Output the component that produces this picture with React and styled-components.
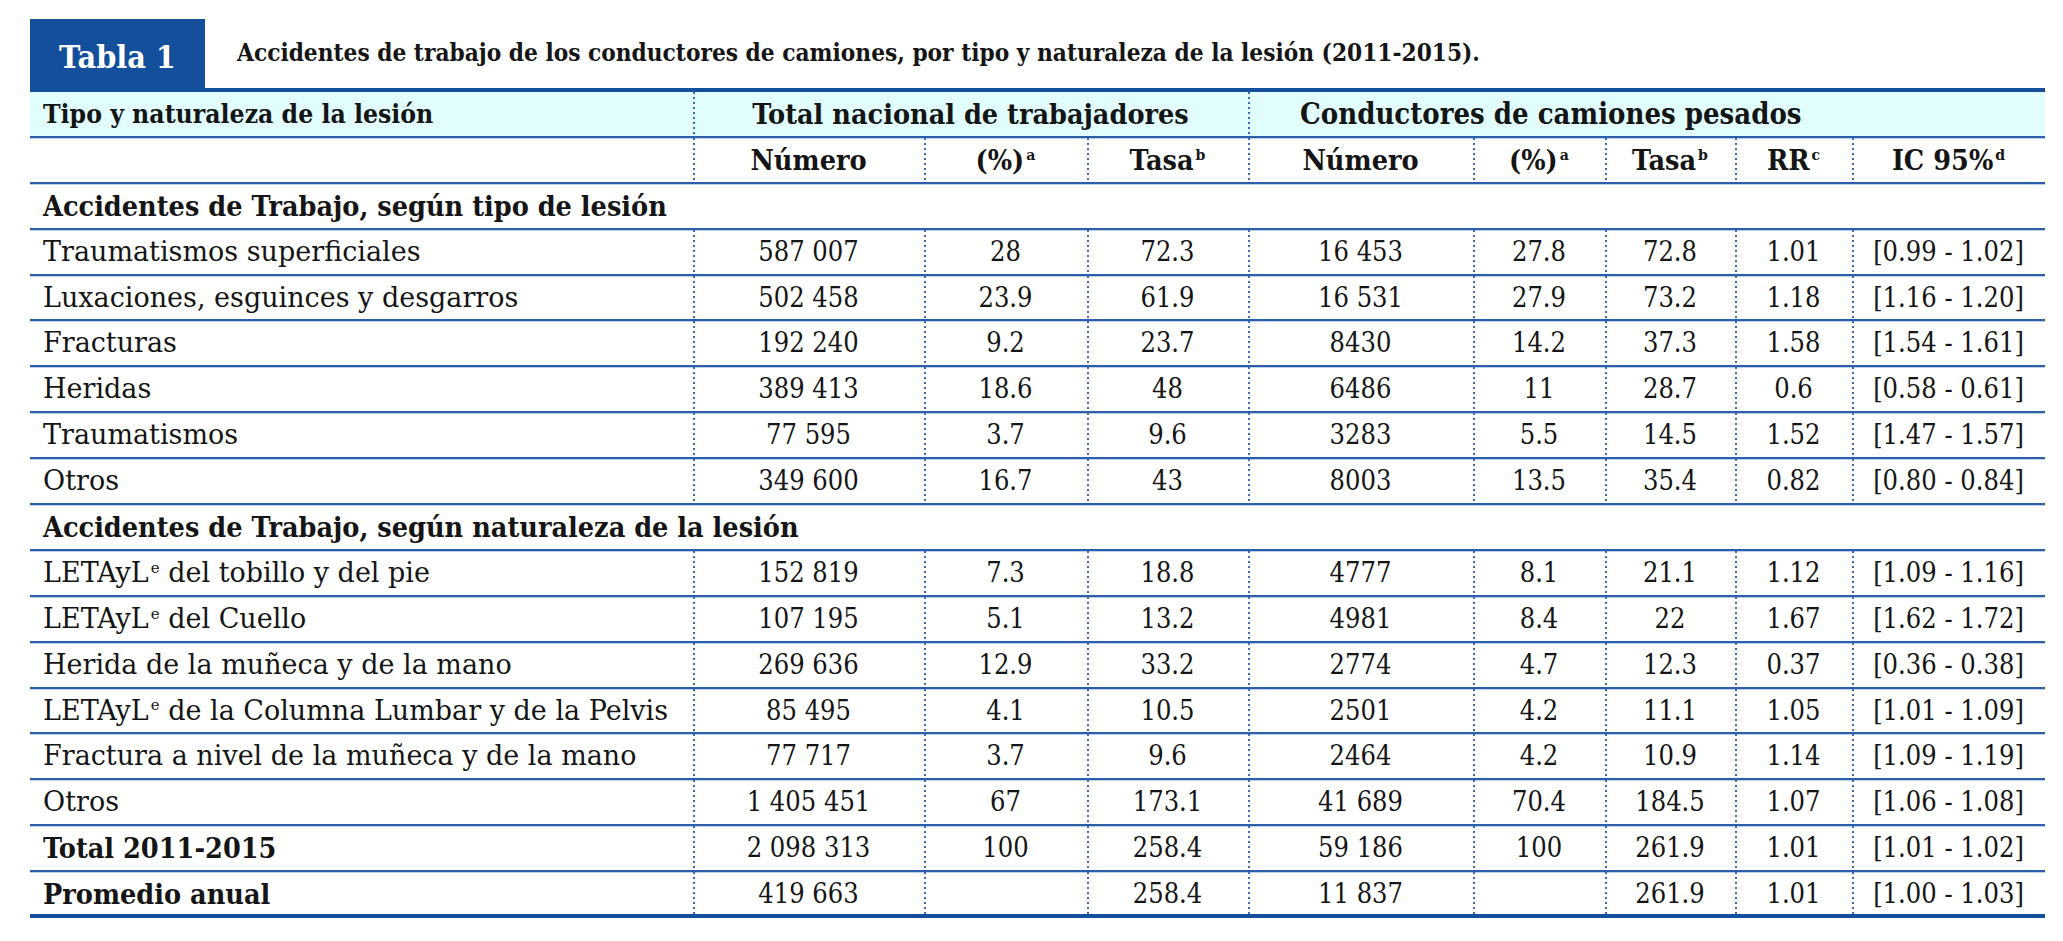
import React from 'react';
import styled, { createGlobalStyle } from 'styled-components';

const COLS = '663px 231px 163px 161px 225px 132px 130px 117px 193px';
const BLUE = '#134f9b';
const LINE = '#2c5fa8';

const GlobalStyle = createGlobalStyle`
  body {
    margin: 0;
    background: #ffffff;
    font-family: "DejaVu Serif Condensed", "DejaVu Serif", serif;
    font-stretch: condensed;
    color: #151515;
  }
`;

const Page = styled.div`
  padding: 19px 0 0 30px;
  width: 2015px;
`;

const Caption = styled.div`
  display: flex;
  align-items: center;
  height: 69px;
`;

const Badge = styled.div`
  width: 175px;
  height: 69px;
  box-sizing: border-box;
  padding-top: 6px;
  background: ${BLUE};
  color: #ffffff;
  display: flex;
  align-items: center;
  justify-content: center;
  font-size: 32px;
  font-weight: 700;
`;

const CaptionTitle = styled.div`
  margin-left: 32px;
  padding-bottom: 2px;
  font-size: 24.2px;
  font-weight: 700;
`;

const Table = styled.div`
  border-top: 4px solid ${BLUE};
`;

const Row = styled.div`
  display: grid;
  grid-template-columns: ${COLS};
  height: 45.9px;
  box-sizing: border-box;
  border-bottom: 2px solid ${LINE};
  box-shadow: 0 1px 0 #bcd0ec;
  background: ${(p) => (p.$tint ? '#e1fdfe' : 'transparent')};

  &:last-child {
    border-bottom: 4px solid ${BLUE};
    box-shadow: none;
  }
`;

const Cell = styled.div`
  grid-column: span ${(p) => p.$span || 1};
  text-align: ${(p) => (p.$left ? 'left' : 'center')};
  padding-left: ${(p) => p.$pad || 0}px;
  line-height: 44px;
  font-size: ${(p) => (p.$bold ? p.$size || 28.5 : 27)}px;
  font-weight: ${(p) => (p.$bold ? 700 : 400)};
  white-space: nowrap;
  background-image: ${(p) =>
    p.$sep ? `linear-gradient(to bottom, #3a6cbc 40%, transparent 40%)` : 'none'};
  background-size: 2px 5px;
  background-repeat: repeat-y;
  background-position: left top;
`;

const LabelCell = styled(Cell)`
  font-family: ${(p) => (p.$bold ? 'inherit' : '"DejaVu Serif", serif')};
  font-stretch: ${(p) => (p.$bold ? 'condensed' : 'normal')};
`;

const Sup = styled.span`
  font-size: 0.55em;
  vertical-align: 0.62em;
  line-height: 0;
  margin-left: 2px;
`;

const sectionOne = [
  ['Traumatismos superficiales', '587 007', '28', '72.3', '16 453', '27.8', '72.8', '1.01', '[0.99 - 1.02]'],
  ['Luxaciones, esguinces y desgarros', '502 458', '23.9', '61.9', '16 531', '27.9', '73.2', '1.18', '[1.16 - 1.20]'],
  ['Fracturas', '192 240', '9.2', '23.7', '8430', '14.2', '37.3', '1.58', '[1.54 - 1.61]'],
  ['Heridas', '389 413', '18.6', '48', '6486', '11', '28.7', '0.6', '[0.58 - 0.61]'],
  ['Traumatismos', '77 595', '3.7', '9.6', '3283', '5.5', '14.5', '1.52', '[1.47 - 1.57]'],
  ['Otros', '349 600', '16.7', '43', '8003', '13.5', '35.4', '0.82', '[0.80 - 0.84]'],
];

const sectionTwo = [
  [['LETAyL', 'e', ' del tobillo y del pie'], '152 819', '7.3', '18.8', '4777', '8.1', '21.1', '1.12', '[1.09 - 1.16]'],
  [['LETAyL', 'e', ' del Cuello'], '107 195', '5.1', '13.2', '4981', '8.4', '22', '1.67', '[1.62 - 1.72]'],
  ['Herida de la muñeca y de la mano', '269 636', '12.9', '33.2', '2774', '4.7', '12.3', '0.37', '[0.36 - 0.38]'],
  [['LETAyL', 'e', ' de la Columna Lumbar y de la Pelvis'], '85 495', '4.1', '10.5', '2501', '4.2', '11.1', '1.05', '[1.01 - 1.09]'],
  ['Fractura a nivel de la muñeca y de la mano', '77 717', '3.7', '9.6', '2464', '4.2', '10.9', '1.14', '[1.09 - 1.19]'],
  ['Otros', '1 405 451', '67', '173.1', '41 689', '70.4', '184.5', '1.07', '[1.06 - 1.08]'],
];

const totals = [
  ['Total 2011-2015', '2 098 313', '100', '258.4', '59 186', '100', '261.9', '1.01', '[1.01 - 1.02]'],
  ['Promedio anual', '419 663', '', '258.4', '11 837', '', '261.9', '1.01', '[1.00 - 1.03]'],
];

const subHeads = [
  ['Número'],
  ['(%)', 'a'],
  ['Tasa', 'b'],
  ['Número'],
  ['(%)', 'a'],
  ['Tasa', 'b'],
  ['RR', 'c'],
  ['IC 95%', 'd'],
];

const Label = ({ value }) => {
  if (Array.isArray(value)) {
    return (
      <>
        {value[0]}
        <Sup>{value[1]}</Sup>
        {value[2]}
      </>
    );
  }
  return value;
};

const DataRow = ({ row, bold }) => (
  <Row>
    <LabelCell $left $pad={13} $bold={bold}>
      <Label value={row[0]} />
    </LabelCell>
    {row.slice(1).map((v, i) => (
      <Cell key={i} $sep>
        {v}
      </Cell>
    ))}
  </Row>
);

const SectionRow = ({ title }) => (
  <Row>
    <Cell $span={9} $left $pad={13} $bold>
      {title}
    </Cell>
  </Row>
);

const App = () => {
  return (
    <Page>
      <GlobalStyle />
      <Caption>
        <Badge>Tabla 1</Badge>
        <CaptionTitle>
          Accidentes de trabajo de los conductores de camiones, por tipo y naturaleza de la lesión (2011-2015).
        </CaptionTitle>
      </Caption>

      <Table>
        <Row $tint>
          <Cell $left $pad={13} $bold $size={26.3}>
            Tipo y naturaleza de la lesión
          </Cell>
          <Cell $span={3} $sep $bold>
            Total nacional de trabajadores
          </Cell>
          <Cell $span={5} $sep $left $pad={52} $bold $size={29}>
            Conductores de camiones pesados
          </Cell>
        </Row>
        <Row>
          <Cell />
          {subHeads.map((h, i) => (
            <Cell key={i} $sep $bold>
              {h[0]}
              {h[1] && <Sup>{h[1]}</Sup>}
            </Cell>
          ))}
        </Row>

        <SectionRow title="Accidentes de Trabajo, según tipo de lesión" />
        {sectionOne.map((r, i) => (
          <DataRow key={i} row={r} />
        ))}

        <SectionRow title="Accidentes de Trabajo, según naturaleza de la lesión" />
        {sectionTwo.map((r, i) => (
          <DataRow key={i} row={r} />
        ))}

        {totals.map((r, i) => (
          <DataRow key={i} row={r} bold />
        ))}
      </Table>
    </Page>
  );
};

export default App;
